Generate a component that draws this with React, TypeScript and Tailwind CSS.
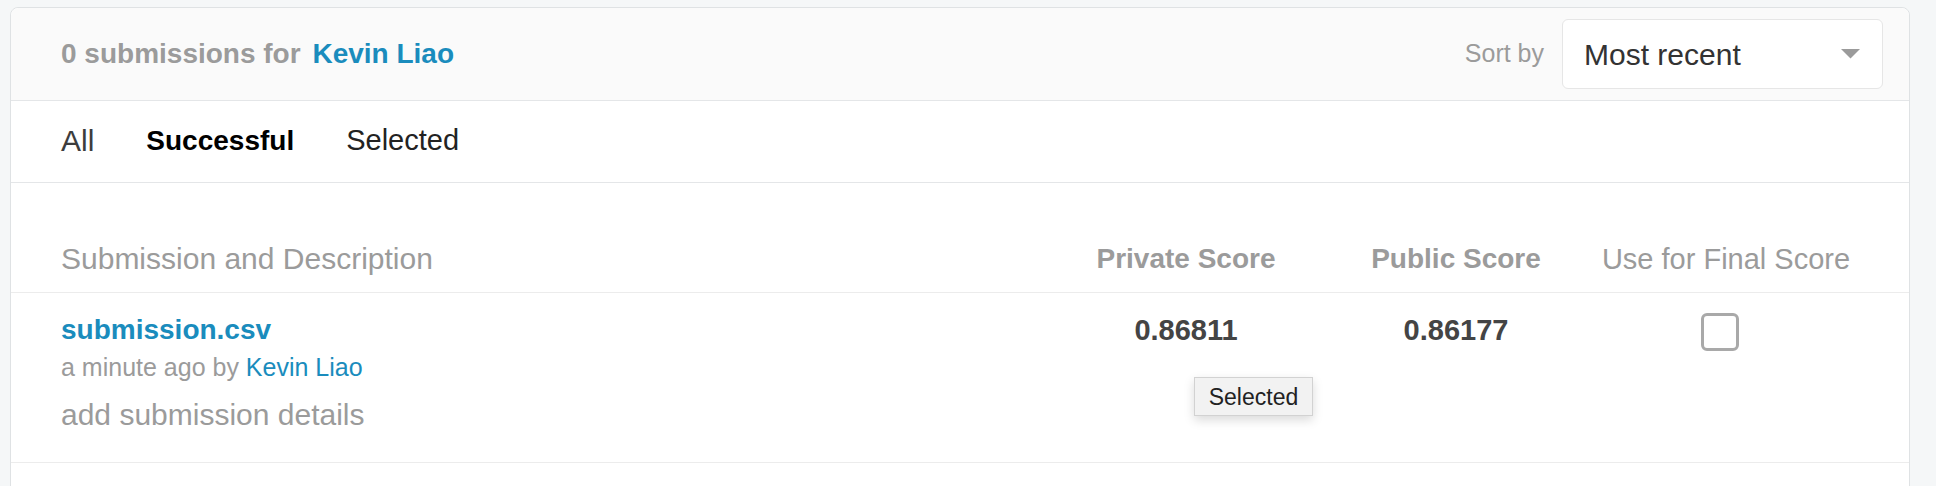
import { useState } from "react";

const font = { fontFamily: '"Liberation Sans", Arial, sans-serif' };

const tabs = [
  { id: "all", label: "All" },
  { id: "successful", label: "Successful" },
  { id: "selected", label: "Selected" },
];

function Caret() {
  return (
    <svg width="19" height="10" viewBox="0 0 19 10" className="shrink-0">
      <path d="M0 0 L19 0 L9.5 9.5 Z" fill="#9b9b9b" />
    </svg>
  );
}

export default function App() {
  const [active, setActive] = useState("successful");
  const [useFinal, setUseFinal] = useState(false);

  return (
    <div className="h-[486px] w-full overflow-hidden bg-[#f5f7f8] pl-[10px] pt-[7px]" style={font}>
      <div className="w-[1900px] rounded-t-[8px] border border-[#dfe2e4] bg-white">
        {/* header */}
        <div className="flex h-[93px] items-center justify-between rounded-t-[8px] border-b border-[#e4e6e8] bg-[#fafafa] pl-[50px] pr-[26px]">
          <h2 className="text-[28px] font-bold leading-none text-[#9b9b9b]">
            0 submissions for{" "}
            <a href="#" className="ml-[4px] text-[#1a8cbd]">
              Kevin Liao
            </a>
          </h2>
          <div className="flex items-center gap-[18px]">
            <span className="text-[25px] text-[#9b9b9b]">Sort by</span>
            <button className="flex h-[70px] w-[321px] items-center justify-between rounded-[6px] border border-[#e6e6e6] bg-white pl-[21px] pr-[22px] text-[30px] text-[#333]">
              Most recent
              <Caret />
            </button>
          </div>
        </div>

        {/* tabs */}
        <div className="flex h-[82px] items-center gap-[52px] border-b border-[#e4e6e8] pb-[2px] pl-[50px]">
          {tabs.map((t) =>
            t.id === active ? (
              <button key={t.id} onClick={() => setActive(t.id)} className="text-[28px] font-bold text-black">
                {t.label}
              </button>
            ) : (
              <button
                key={t.id}
                onClick={() => setActive(t.id)}
                className={t.id === "all" ? "text-[30px] text-[#3d3d3d]" : "text-[29px] text-[#222]"}
              >
                {t.label}
              </button>
            )
          )}
        </div>

        {/* column headings */}
        <div className="flex border-b border-[#ececec] pb-[15px] pl-[50px] pr-[48px] pt-[58px] leading-[36px]">
          <div className="flex-1 text-[30px] text-[#9b9b9b]">Submission and Description</div>
          <div className="w-[270px] text-center text-[28px] font-bold text-[#9b9b9b]">Private Score</div>
          <div className="w-[270px] text-center text-[28px] font-bold text-[#9b9b9b]">Public Score</div>
          <div className="w-[270px] text-center text-[29px] text-[#9b9b9b]">Use for Final Score</div>
        </div>

        {/* submission row */}
        <div className="flex border-b border-[#ececec] pb-[27px] pl-[50px] pr-[48px] pt-[20px]">
          <div className="flex flex-1 flex-col">
            <a href="#" className="text-[28px] font-bold leading-[34px] text-[#1a8cbd]">
              submission.csv
            </a>
            <div className="mt-[4px] text-[25px] leading-[32px] text-[#9b9b9b]">
              a minute ago by{" "}
              <a href="#" className="text-[#1a8cbd]">
                Kevin Liao
              </a>
            </div>
            <div className="mt-[12px] text-[30px] leading-[40px] text-[#9b9b9b]">add submission details</div>
          </div>
          <div className="relative w-[270px] text-center text-[29px] font-bold leading-[34px] text-[#444]">
            0.86811
            <div className="absolute left-[143px] top-[64px] flex h-[39px] w-[119px] items-center justify-center border border-[#d2d2d2] bg-[#f2f2f2] text-[23px] font-normal text-[#222] shadow-[0_4px_10px_rgba(0,0,0,0.15)]">
              Selected
            </div>
          </div>
          <div className="w-[270px] text-center text-[29px] font-bold leading-[34px] text-[#444]">0.86177</div>
          <div className="flex w-[270px] justify-center">
            <button
              onClick={() => setUseFinal(!useFinal)}
              className={
                useFinal
                  ? "h-[38px] w-[38px] -translate-x-[6px] rounded-[6px] border-[3px] border-[#1a8cbd] bg-[#1a8cbd]"
                  : "h-[38px] w-[38px] -translate-x-[6px] rounded-[6px] border-[3px] border-[#a9a9a9] bg-white"
              }
              aria-label="Use for final score"
            />
          </div>
        </div>
        <div className="h-[120px]" />
      </div>
    </div>
  );
}
